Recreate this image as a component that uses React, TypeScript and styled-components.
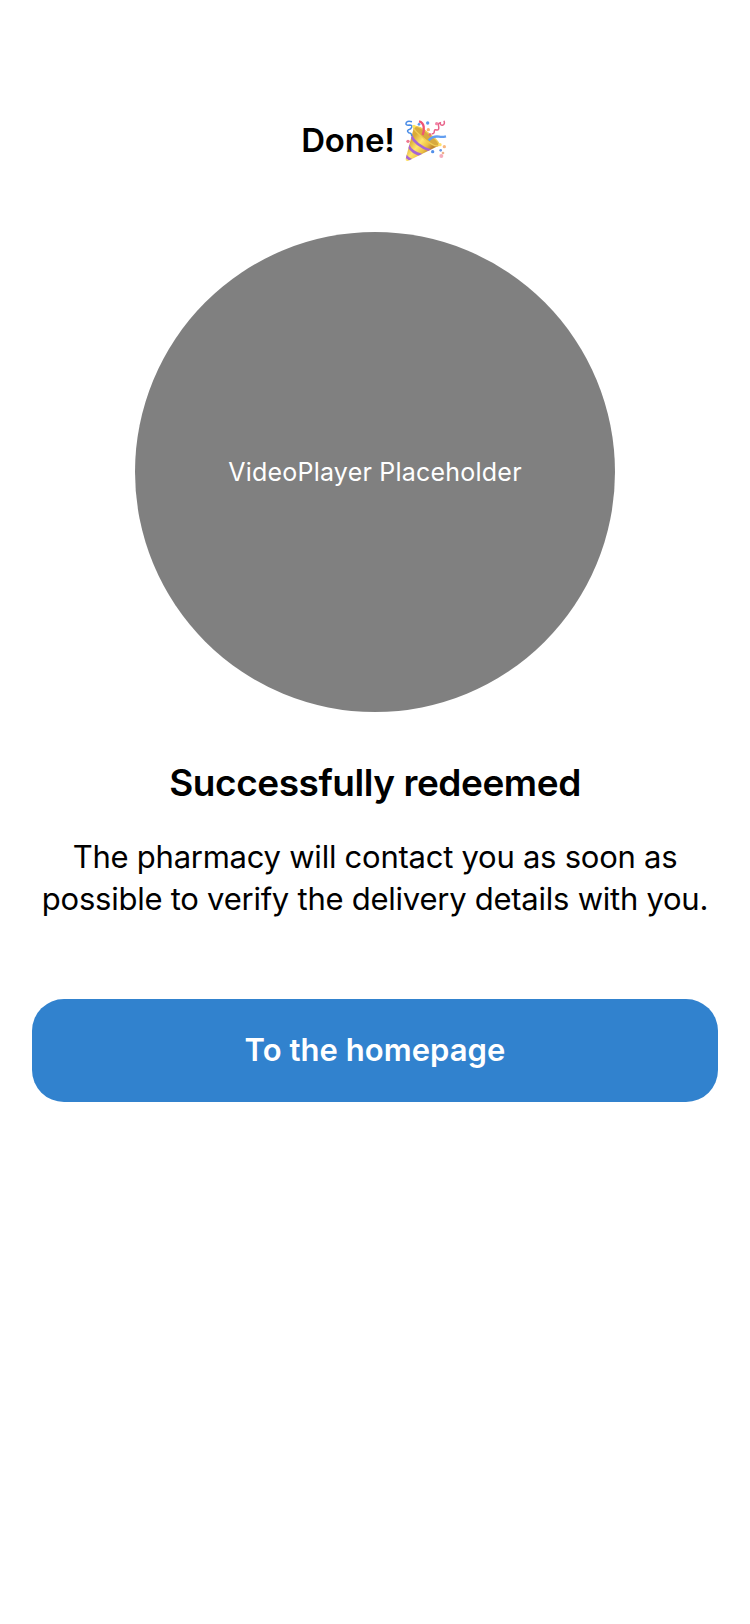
import React from 'react';
import styled, { createGlobalStyle } from 'styled-components';

const GlobalStyle = createGlobalStyle`
  * { box-sizing: border-box; }
  body {
    margin: 0;
    background: #ffffff;
    color: #000000;
    font-family: Inter, "Liberation Sans", sans-serif;
  }
`;

const Screen = styled.main`
  display: flex;
  flex-direction: column;
  align-items: center;
  min-height: 1624px;
  padding: 116px 32px 0;
  text-align: center;
`;

const Header = styled.header`
  display: flex;
  align-items: center;
  gap: 10px;
  height: 50px;
  margin-bottom: 66px;
  padding-right: 2px;
`;

const Title = styled.h1`
  margin: 0;
  padding-bottom: 2px;
  font-size: 33px;
  font-weight: 600;
  line-height: 48px;
  letter-spacing: -0.1px;
`;

const VideoPlaceholder = styled.div`
  display: flex;
  align-items: center;
  justify-content: center;
  width: 480px;
  height: 480px;
  border-radius: 50%;
  background: #808080;
  color: #ffffff;
  font-size: 25px;
  letter-spacing: 0.22px;
`;

const Subtitle = styled.h2`
  margin: 47px 0 0;
  font-size: 37px;
  font-weight: 600;
  line-height: 48px;
  letter-spacing: -0.45px;
`;

const Message = styled.p`
  width: 686px;
  margin: 29px 0 79px;
  font-size: 31px;
  line-height: 42px;
  letter-spacing: -0.25px;
`;

const PrimaryButton = styled.button`
  width: 100%;
  height: 103px;
  padding: 0 0 2px;
  border: 0;
  border-radius: 32px;
  background: #3182ce;
  color: #ffffff;
  font-family: inherit;
  font-size: 31px;
  font-weight: 600;
  letter-spacing: 0.05px;
`;

const PopperIcon = styled.svg`
  display: block;
  width: 42px;
  height: 42px;
`;

function PartyPopper() {
  return (
    <PopperIcon viewBox="0 0 126 126" fill="none" aria-hidden="true">
      <defs>
        <linearGradient id="cone" x1="18" y1="62" x2="68" y2="100" gradientUnits="userSpaceOnUse">
          <stop offset="0" stopColor="#dcaa38" />
          <stop offset="0.4" stopColor="#ffe56c" />
          <stop offset="0.75" stopColor="#edc044" />
          <stop offset="1" stopColor="#c08630" />
        </linearGradient>
        <clipPath id="coneClip">
          <path d="M27 21 L2 116 Q1 125 10 122 L101 77 Q82 75 60 55 Q38 36 27 21Z" />
        </clipPath>
      </defs>
      <path d="M27 21 L2 116 Q1 125 10 122 L101 77 Q82 75 60 55 Q38 36 27 21Z" fill="url(#cone)" />
      <g clipPath="url(#coneClip)" stroke="#a766d4" strokeWidth="8">
        <path d="M17 45 Q32 78 78 92" />
        <path d="M8 74 Q20 99 52 106" />
        <path d="M-2 103 Q6 114 22 122" />
      </g>
      <path d="M27 21 C33 14 57 27 76 44 C95 58 106 73 100 77 C93 81 73 69 54 53 C35 38 23 27 27 21Z" fill="#d8aa3e" stroke="#f0cd55" strokeWidth="4" />
      <path d="M42 4 Q54 7 56 20 Q58 34 53 45" stroke="#ef5474" strokeWidth="7" />
      <path d="M71 61 Q84 47 102 50 Q112 52 123 49" stroke="#629ef0" strokeWidth="7" />
      <path d="M21 5 Q4 1 3 10 Q2 17 13 15 Q23 15 20 22 Q18 28 11 29 Q4 33 11 38 Q21 39 20 48" stroke="#4a8ce6" strokeWidth="4.5" />
      <path d="M117 2 Q121 13 112 16 Q105 16 106 8 Q98 9 101 20 Q103 31 95 30 Q89 27 88 33 Q88 43 80 41" stroke="#e8648a" strokeWidth="4.5" />
      <circle cx="27" cy="19" r="5" fill="#ffe35b" />
      <circle cx="68" cy="9" r="5" fill="#5d99f0" />
      <circle cx="42" cy="13" r="4" fill="#5d99f0" />
      <circle cx="70" cy="29" r="5" fill="#ffb06c" />
      <circle cx="95" cy="11" r="5" fill="#f286a8" />
      <circle cx="75" cy="44" r="4" fill="#ed6a80" />
      <circle cx="9" cy="64" r="5" fill="#ef7890" />
      <circle cx="105" cy="74" r="5" fill="#ffe06a" />
      <circle cx="118" cy="80" r="5" fill="#f8b880" />
      <circle cx="83" cy="95" r="5" fill="#5290ea" />
      <circle cx="107" cy="91" r="4" fill="#6a98e4" />
      <circle cx="114" cy="99" r="4" fill="#eeb28b" />
      <circle cx="109" cy="108" r="6" fill="#f4acbd" />
    </PopperIcon>
  );
}

export default function App() {
  return (
    <>
      <GlobalStyle />
      <Screen>
        <Header>
          <Title>Done!</Title>
          <PartyPopper />
        </Header>
        <VideoPlaceholder>VideoPlayer Placeholder</VideoPlaceholder>
        <Subtitle>Successfully redeemed</Subtitle>
        <Message>
          The pharmacy will contact you as soon as
          <br />
          possible to verify the delivery details with you.
        </Message>
        <PrimaryButton type="button">To the homepage</PrimaryButton>
      </Screen>
    </>
  );
}
